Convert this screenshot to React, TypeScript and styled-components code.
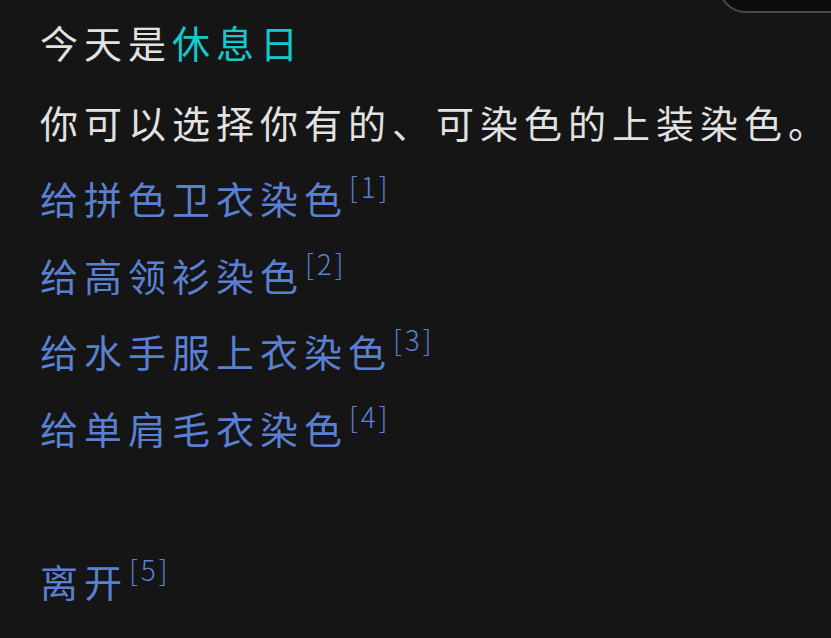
import React from "react";
import styled, { createGlobalStyle } from "styled-components";

const Global = createGlobalStyle`
  html, body {
    margin: 0;
    padding: 0;
    background: #151515;
  }
  body {
    width: 831px;
    height: 638px;
    overflow: hidden;
    font-family: "Noto Sans CJK SC", "Noto Sans", sans-serif;
  }
`;

const Screen = styled.div`
  position: relative;
  width: 831px;
  height: 638px;
  background: #151515;
  overflow: hidden;
`;

/* edge of a floating panel peeking in at the top right */
const Panel = styled.div`
  position: absolute;
  top: -40px;
  left: 718px;
  width: 140px;
  height: 49px;
  background: #0d0d0d;
  border: 2px solid #4a4a4a;
  border-bottom-left-radius: 28px;
`;

const Story = styled.div`
  display: flex;
  flex-direction: column;
  padding: 4px 0 0 40px;
`;

const Line = styled.div<{ $gapBefore?: number }>`
  font-size: 38px;
  font-weight: 400;
  letter-spacing: 6px;
  line-height: 76.5px;
  height: 76.5px;
  white-space: nowrap;
  color: #e2e2e2;
  margin-top: ${(p) => p.$gapBefore ?? 0}px;
`;

const Accent = styled.span`
  color: #14c8cc;
`;

const Choice = styled(Line)`
  color: #5a80d2;
  cursor: pointer;
`;

const Note = styled.sup`
  font-size: 28px;
  font-weight: 300;
  letter-spacing: 3px;
  line-height: 0;
  vertical-align: 0;
  position: relative;
  top: -16px;
  margin-left: 1px;
`;

const choices = [
  { text: "给拼色卫衣染色", n: 1 },
  { text: "给高领衫染色", n: 2 },
  { text: "给水手服上衣染色", n: 3 },
  { text: "给单肩毛衣染色", n: 4 },
];

export default function App() {
  return (
    <Screen>
      <Global />
      <Panel />
      <Story>
        <Line>
          今天是<Accent>休息日</Accent>
        </Line>
        <Line $gapBefore={3}>你可以选择你有的、可染色的上装染色。</Line>
        {choices.map((c) => (
          <Choice key={c.n}>
            {c.text}
            <Note>[{c.n}]</Note>
          </Choice>
        ))}
        <Choice $gapBefore={77}>
          离开
          <Note>[5]</Note>
        </Choice>
      </Story>
    </Screen>
  );
}
